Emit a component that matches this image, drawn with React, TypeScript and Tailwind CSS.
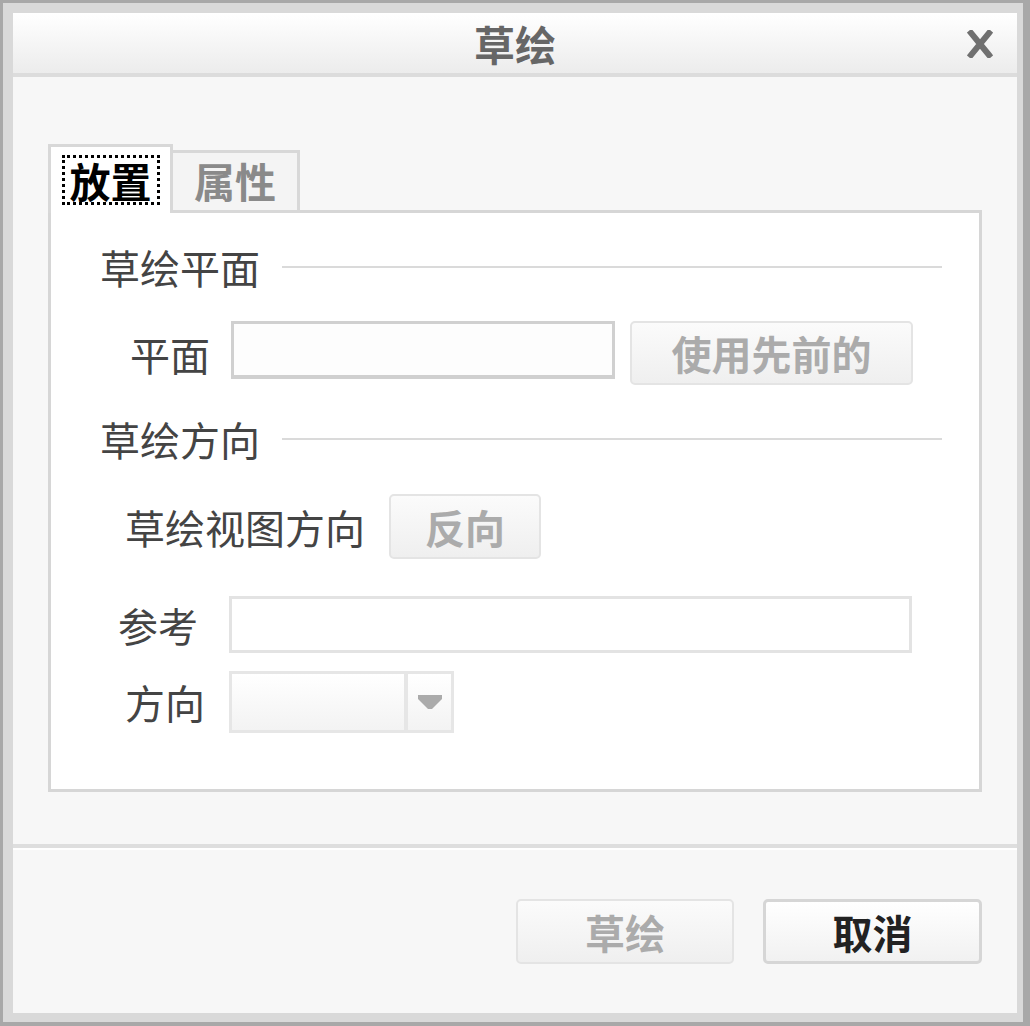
import React from "react"

function SectionHeader({ title }: { title: string }) {
    return (
        <div className="flex h-[40px] items-center pl-[49px] pr-[37px]">
            <span className="text-[40px] leading-none text-[#444]">{title}</span>
            <div className="ml-[22px] h-[2px] flex-1 bg-[#dadada]" />
        </div>
    )
}

function GrayButton({ label, className }: { label: string; className: string }) {
    return (
        <div
            className={`flex items-center justify-center rounded-[5px] border-[2px] border-[#e4e4e4] bg-gradient-to-b from-[#fbfbfb] to-[#efefef] text-[40px] font-bold leading-none text-[#ababab] ${className}`}
        >
            {label}
        </div>
    )
}

export default function App() {
    return (
        <div className="h-[1026px] w-[1030px] bg-[#a8a8a8] pb-[4px] pl-[3px] pr-[7px] pt-[3px] font-['Noto_Sans_CJK_SC','Noto_Sans',sans-serif]">
            <div className="flex h-full w-full flex-col bg-[#d9d9d9] pb-[9px] pl-[10px] pr-[6px] pt-[10px]">
                {/* title bar */}
                <div className="relative flex h-[60px] items-center justify-center bg-gradient-to-b from-[#ffffff] to-[#ececec]">
                    <span className="text-[41px] font-bold leading-none text-[#666]">草绘</span>
                    <svg
                        className="absolute right-[24px] top-[17px]"
                        width="26"
                        height="28"
                        viewBox="0 0 26 28"
                    >
                        <path d="M4 3 L22 25 M22 3 L4 25" stroke="#707070" strokeWidth="6" strokeLinecap="square" />
                    </svg>
                </div>
                <div className="h-[4px] bg-[#dcdcdc]" />

                {/* body */}
                <div className="flex flex-1 flex-col bg-[#f7f7f7]">
                    <div className="px-[35px] pt-[67px]">
                        {/* tabs */}
                        <div className="relative z-10 -mb-[3px] flex items-end">
                            <div className="flex h-[69px] w-[125px] items-start justify-center border-[3px] border-b-0 border-[#d8d8d8] bg-white pt-[8px]">
                                <div className="flex h-[50px] w-[98px] items-center justify-center border-[3px] border-dotted border-black">
                                    <span className="text-[41px] font-bold leading-none text-black">放置</span>
                                </div>
                            </div>
                            <div className="flex h-[63px] w-[127px] items-center justify-center border-[3px] border-l-0 border-[#d8d8d8] bg-[#f4f4f4] pb-[2px]">
                                <span className="text-[41px] font-bold leading-none text-[#8a8a8a]">属性</span>
                            </div>
                        </div>

                        {/* panel */}
                        <div className="flex h-[582px] flex-col border-[3px] border-[#d6d6d6] bg-white pt-[34px]">
                            <SectionHeader title="草绘平面" />

                            <div className="mt-[34px] flex h-[64px] items-start">
                                <span className="ml-[79px] mt-[13px] text-[40px] leading-none text-[#444]">平面</span>
                                <div className="ml-[21px] h-[58px] w-[384px] border-[3px] border-b-[4px] border-[#d0d0d0] bg-[#fdfdfd]" />
                                <GrayButton label="使用先前的" className="ml-[15px] h-[64px] w-[283px]" />
                            </div>

                            <div className="mt-[34px]">
                                <SectionHeader title="草绘方向" />
                            </div>

                            <div className="mt-[35px] flex h-[65px] items-center">
                                <span className="ml-[74px] text-[40px] leading-none text-[#444]">草绘视图方向</span>
                                <GrayButton label="反向" className="ml-[24px] h-[65px] w-[152px]" />
                            </div>

                            <div className="mt-[37px] flex h-[57px] items-center">
                                <span className="ml-[67px] text-[40px] leading-none text-[#444]">参考</span>
                                <div className="ml-[31px] h-[57px] w-[683px] border-[3px] border-[#e3e3e3] bg-white" />
                            </div>

                            <div className="mt-[18px] flex h-[62px] items-center">
                                <span className="ml-[74px] text-[40px] leading-none text-[#444]">方向</span>
                                <div className="ml-[24px] flex h-[62px] w-[225px] border-[3px] border-[#e6e6e6] bg-gradient-to-b from-white to-[#f3f3f3]">
                                    <div className="flex-1" />
                                    <div className="flex w-[47px] items-center justify-center border-l-[4px] border-[#e6e6e6]">
                                        <svg width="24" height="14" viewBox="0 0 24 14">
                                            <path d="M0 0 H24 V4 L14 14 H10 L0 4 Z" fill="#ababab" />
                                        </svg>
                                    </div>
                                </div>
                            </div>
                        </div>
                    </div>

                    {/* footer separator */}
                    <div className="mt-[52px] h-[4px] bg-[#dedede]" />
                    <div className="h-[2px] bg-white" />

                    {/* footer buttons */}
                    <div className="flex justify-end gap-[29px] pr-[35px] pt-[49px]">
                        <GrayButton label="草绘" className="h-[65px] w-[218px]" />
                        <div className="flex h-[65px] w-[219px] items-center justify-center rounded-[5px] border-[3px] border-[#d6d6d6] bg-gradient-to-b from-white to-[#f1f1f1] text-[40px] font-bold leading-none text-[#222]">
                            取消
                        </div>
                    </div>
                </div>
            </div>
        </div>
    )
}
